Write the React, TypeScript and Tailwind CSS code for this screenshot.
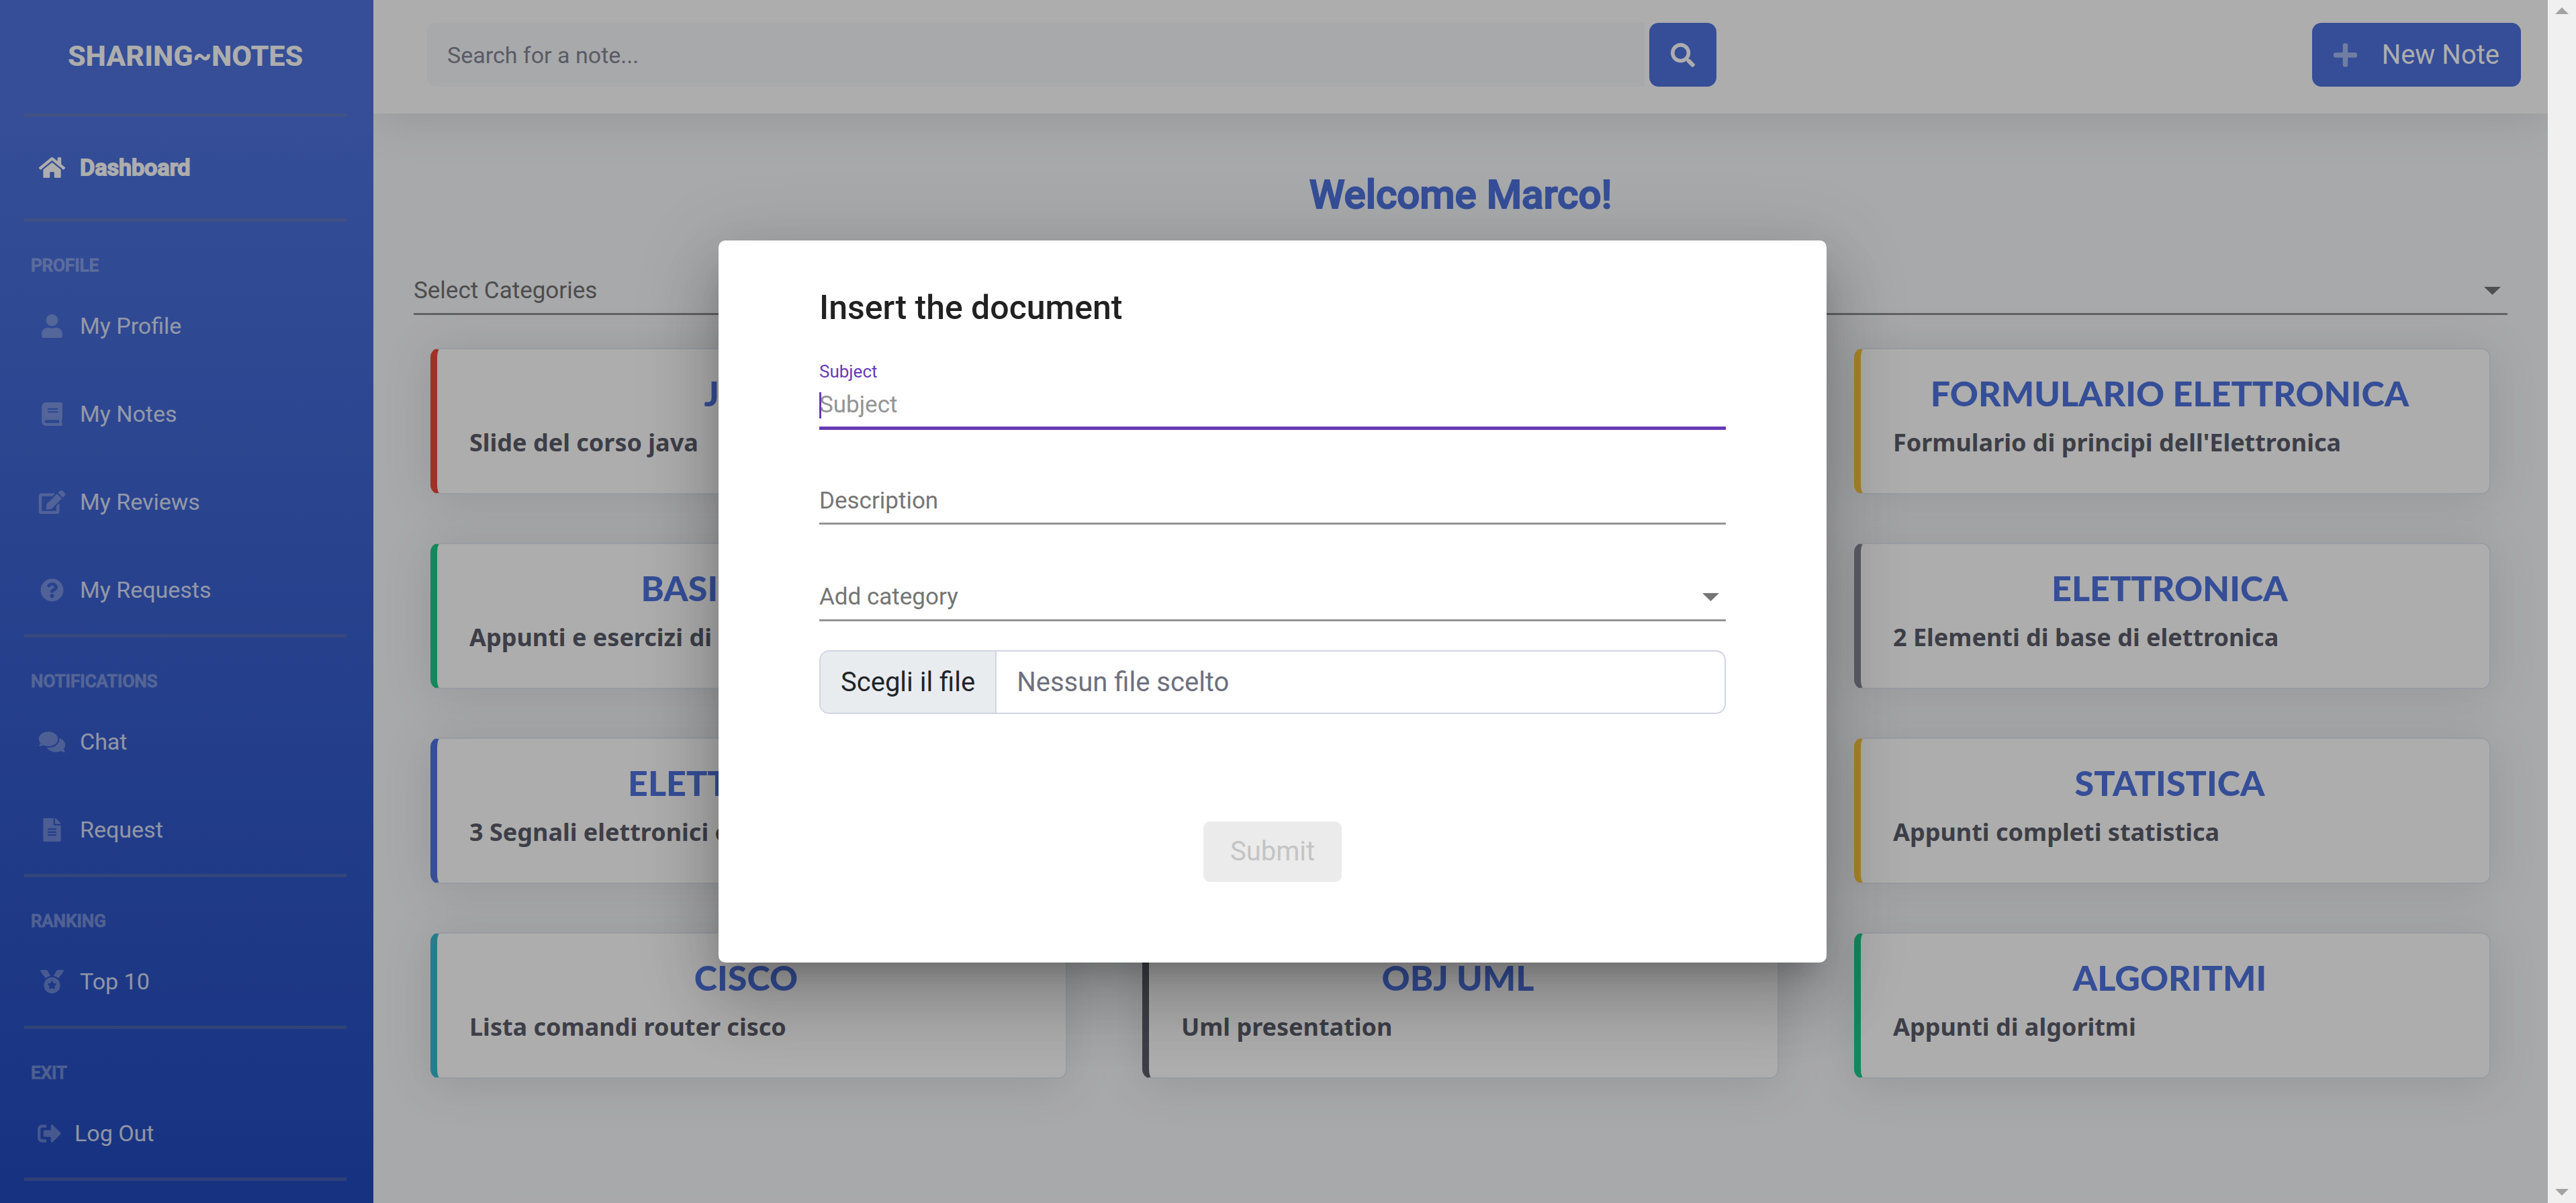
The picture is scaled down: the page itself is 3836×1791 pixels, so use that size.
import type { ReactNode } from "react";
import type { IconType } from "react-icons";
import {
  FaBook,
  FaComments,
  FaEdit,
  FaFileAlt,
  FaHome,
  FaMedal,
  FaPlus,
  FaQuestionCircle,
  FaSearch,
  FaSignOutAlt,
  FaUser,
} from "react-icons/fa";

type NavItem = { label: string; icon: IconType; narrow?: boolean };
type NavSection = { heading: string; items: NavItem[] };

const sections: NavSection[] = [
  {
    heading: "PROFILE",
    items: [
      { label: "My Profile", icon: FaUser },
      { label: "My Notes", icon: FaBook },
      { label: "My Reviews", icon: FaEdit },
      { label: "My Requests", icon: FaQuestionCircle },
    ],
  },
  {
    heading: "NOTIFICATIONS",
    items: [
      { label: "Chat", icon: FaComments },
      { label: "Request", icon: FaFileAlt },
    ],
  },
  { heading: "RANKING", items: [{ label: "Top 10", icon: FaMedal }] },
  { heading: "EXIT", items: [{ label: "Log Out", icon: FaSignOutAlt, narrow: true }] },
];

type Note = { title: string; text: string; accent: string };

const notes: Note[] = [
  { title: "JAVA", text: "Slide del corso java", accent: "border-l-[#e74a3b]" },
  { title: "", text: "", accent: "border-l-[#4e73df]" },
  {
    title: "FORMULARIO ELETTRONICA",
    text: "Formulario di principi dell'Elettronica",
    accent: "border-l-[#f6c23e]",
  },
  { title: "BASI DI DATI", text: "Appunti e esercizi di basi di dati", accent: "border-l-[#1cc88a]" },
  { title: "", text: "", accent: "border-l-[#36b9cc]" },
  { title: "ELETTRONICA", text: "2 Elementi di base di elettronica", accent: "border-l-[#858796]" },
  { title: "ELETTRONICA", text: "3 Segnali elettronici e circuiti", accent: "border-l-[#4e73df]" },
  { title: "", text: "", accent: "border-l-[#e74a3b]" },
  { title: "STATISTICA", text: "Appunti completi statistica", accent: "border-l-[#f6c23e]" },
  { title: "CISCO", text: "Lista comandi router cisco", accent: "border-l-[#36b9cc]" },
  { title: "OBJ UML", text: "Uml presentation", accent: "border-l-[#5a5c69]" },
  { title: "ALGORITMI", text: "Appunti di algoritmi", accent: "border-l-[#1cc88a]" },
];

function Divider() {
  return <hr className="mr-10 ml-9 h-[5px] border-0 bg-[#858796]/35" />;
}

function Caret() {
  return (
    <svg viewBox="0 0 25 12" className="mr-[10px] h-3 w-[25px] shrink-0 fill-[#757575]" aria-hidden="true">
      <path d="M0 0h25L12.5 12z" />
    </svg>
  );
}

function Sidebar() {
  return (
    <nav className="relative z-10 w-[556px] shrink-0 bg-linear-to-b from-[#4e73df] from-10% to-[#224abe] text-[34px] leading-10">
      <a
        href="#home"
        className="flex h-[169px] items-center justify-center pr-1 pb-1 text-[43px] font-extrabold text-white"
      >
        SHARING~NOTES
      </a>
      <Divider />
      <a href="#dashboard" className="flex items-center gap-5 pt-[55px] pb-14 pl-14 font-medium text-white">
        <FaHome className="h-[35px] w-[43px]" />
        <span className="[-webkit-text-stroke:2px_white]">Dashboard</span>
      </a>
      {sections.map((s) => (
        <section key={s.heading}>
          <Divider />
          <h2 className="pt-[50px] pb-[10px] pl-[46px] text-[26px] leading-[30px] font-medium text-white opacity-35 [-webkit-text-stroke:1px_white]">
            {s.heading}
          </h2>
          {s.items.map(({ label, icon: Icon, narrow }) => (
            <a
              key={label}
              href={"#" + label.toLowerCase().replace(" ", "-")}
              className="flex items-center gap-5 pt-[45px] pb-[46px] pl-14 text-white/80"
            >
              <Icon className={(narrow ? "w-[35px]" : "w-[43px]") + " h-[35px] text-white/30"} />
              {label}
            </a>
          ))}
        </section>
      ))}
      <Divider />
    </nav>
  );
}

function Topbar() {
  return (
    <header className="relative flex justify-between bg-white pt-[34px] pr-10 pb-10 pl-20 shadow-[0_6px_70px_rgba(58,59,69,0.15)]">
      <form className="flex w-[1920px] max-w-[70%] gap-[7px]">
        <input
          type="search"
          aria-label="Search for a note"
          placeholder="Search for a note..."
          className="h-[95px] min-w-0 flex-1 rounded-l-[14px] bg-[#f8f9fc] px-[30px] text-[34px] placeholder:text-[#858796]"
        />
        <button
          type="button"
          aria-label="Search"
          className="flex h-[95px] w-[100px] items-center justify-center rounded-[14px] bg-[#4e73df] text-white"
        >
          <FaSearch className="size-9" />
        </button>
      </form>
      <button
        type="button"
        className="flex h-[95px] items-center gap-[37px] rounded-[14px] bg-[#4e73df] px-8 text-[40px] text-white"
      >
        <FaPlus className="h-10 w-[35px] text-white/50" />
        New Note
      </button>
    </header>
  );
}

function NoteCard({ title, text, accent }: Note) {
  return (
    <article
      className={
        "rounded-[14px] border-2 border-l-[10px] border-[#e3e6f0] bg-white pt-[35px] pr-16 pb-[50px] pl-12 shadow-[0_6px_70px_rgba(58,59,69,0.15)] " +
        accent
      }
    >
      <h2 className="min-h-[60px] text-center font-['Gill_Sans','Gill_Sans_MT',Lato,sans-serif] text-[52px] leading-[60px] font-black text-[#4e73df]">
        {title}
      </h2>
      <p className="mt-[19px] min-h-[50px] font-['Gill_Sans','Gill_Sans_MT','Noto_Sans',sans-serif] text-[36px] leading-[50px] font-bold text-[#5a5c69]">
        {text}
      </p>
    </article>
  );
}

function Field({ children, className }: { children: ReactNode; className: string }) {
  return <div className={"flex items-center text-[35px] leading-[42px] " + className}>{children}</div>;
}

function DocumentDialog() {
  return (
    <form
      role="dialog"
      aria-labelledby="dialog-title"
      className="flex w-[1650px] max-w-full flex-col rounded-[10px] bg-white px-[150px] pt-[70px] pb-[120px] shadow-[0_28px_38px_-18px_rgba(0,0,0,0.2),0_60px_95px_8px_rgba(0,0,0,0.14),0_23px_115px_20px_rgba(0,0,0,0.12)]"
    >
      <h2 id="dialog-title" className="text-[50px] leading-[60px] font-medium text-[#212121]">
        Insert the document
      </h2>
      <label htmlFor="subject" className="mt-[50px] text-[26px] leading-[30px] text-[#673ab7]">
        Subject
      </label>
      <Field className="relative mt-[14px] border-b-[5px] border-[#673ab7] pb-[11px]">
        <input
          id="subject"
          type="text"
          placeholder="Subject"
          className="h-[42px] flex-1 outline-none placeholder:text-[#949494]"
        />
        <span className="absolute top-0.5 left-0 h-[39px] w-[3px] bg-[#673ab7]" />
      </Field>
      <Field className="mt-[85px] border-b-[3px] border-[#949494] pb-[11px]">
        <input
          type="text"
          aria-label="Description"
          placeholder="Description"
          className="h-[42px] flex-1 outline-none placeholder:text-[#757575]"
        />
      </Field>
      <Field className="mt-[87px] border-b-[3px] border-[#949494] pb-3">
        <select aria-label="Add category" className="h-[42px] flex-1 appearance-none text-[#757575]">
          <option>Add category</option>
        </select>
        <Caret />
      </Field>
      <label className="mt-[43px] flex h-[95px] items-stretch overflow-hidden rounded-[15px] border-2 border-[#d1d3e2] text-[40px] text-[#6e707e]">
        <input type="file" className="sr-only" />
        <span className="flex items-center border-r-2 border-[#d1d3e2] bg-[#e9ecef] px-[30px] text-[#212529]">
          Scegli il file
        </span>
        <span className="flex items-center px-[30px]">Nessun file scelto</span>
      </label>
      <button
        type="submit"
        disabled
        className="mt-40 h-[90px] self-center rounded-[10px] bg-[#ebebeb] px-10 text-[40px] text-[#c4c4c4]"
      >
        Submit
      </button>
    </form>
  );
}

function ScrollBar() {
  return (
    <div className="flex w-[42px] shrink-0 flex-col items-center justify-between bg-[#f0f0f0] pt-[11px] pb-[11px]" aria-hidden="true">
      <svg viewBox="0 0 20 10" className="h-[10px] w-5 fill-[#a3a3a3]">
        <path d="M0 10h20L10 0z" />
      </svg>
      <svg viewBox="0 0 20 10" className="h-[10px] w-5 fill-[#a3a3a3]">
        <path d="M0 0h20L10 10z" />
      </svg>
    </div>
  );
}

export default function App() {
  return (
    <div className="flex min-h-screen font-[Roboto,sans-serif]">
      <div className="relative flex min-w-0 flex-1 overflow-hidden">
        <Sidebar />
        <div className="flex min-w-0 flex-1 flex-col bg-[#f8f9fc]">
          <Topbar />
          <main>
            <h1 className="pt-[86px] text-center text-[60px] leading-[70px] font-medium text-[#4e73df] [-webkit-text-stroke:2px_#4e73df]">
              Welcome Marco!
            </h1>
            <Field className="mx-[60px] mt-[87px] border-b-[3px] border-[#909193] pb-3">
              <select aria-label="Select Categories" className="h-[42px] flex-1 appearance-none text-[#717173]">
                <option>Select Categories</option>
              </select>
              <Caret />
            </Field>
            <div className="mt-[49px] grid grid-cols-3 gap-x-28 gap-y-[72px] px-[85px]">
              {notes.map((n, i) => (
                <NoteCard key={i} {...n} />
              ))}
            </div>
          </main>
        </div>
        <div className="absolute inset-0 z-20 flex items-center justify-center bg-black/32 pr-1">
          <DocumentDialog />
        </div>
      </div>
      <ScrollBar />
    </div>
  );
}
